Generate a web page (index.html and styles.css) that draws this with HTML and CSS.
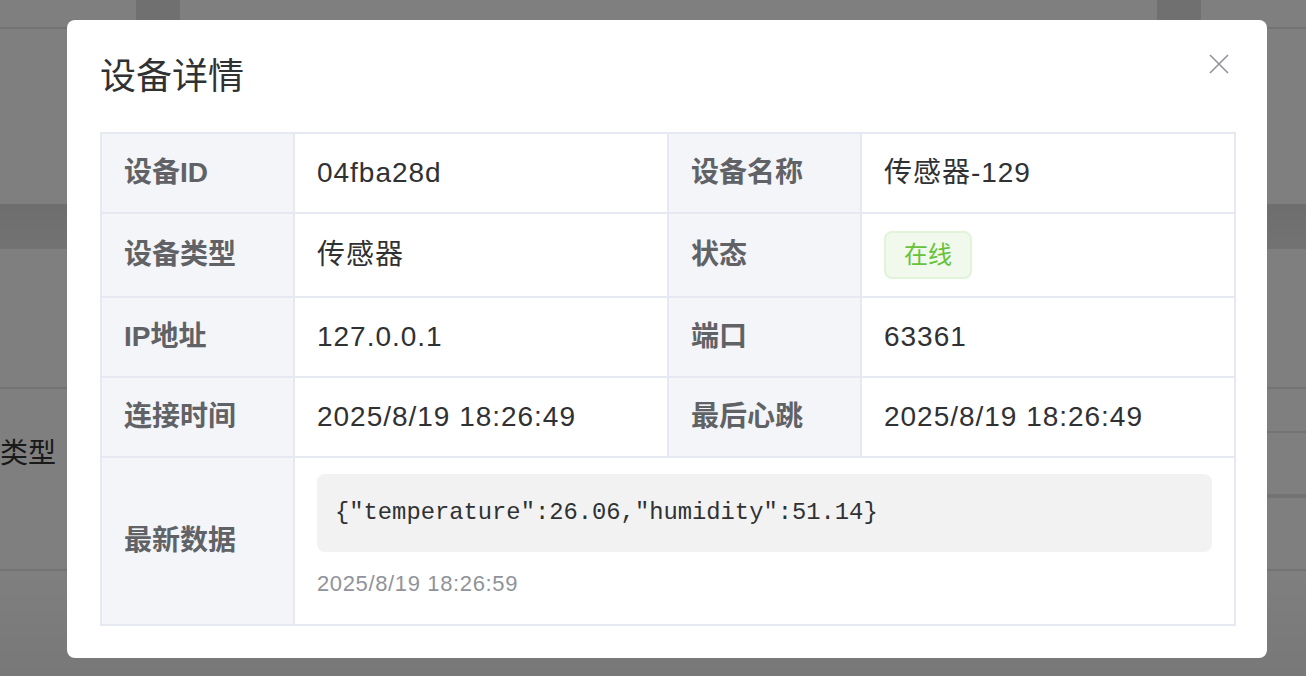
FILE: index.html
```html
<!DOCTYPE html>
<html lang="zh-CN">
<head>
<meta charset="utf-8">
<title>设备详情</title>
<link rel="stylesheet" href="styles.css">
</head>
<body>
<div class="page">
  <div class="page-top">
    <div class="page-col page-col-a"></div>
    <div class="page-col page-col-b"></div>
  </div>
  <div class="page-gap1"></div>
  <div class="page-band"></div>
  <div class="page-gap2"></div>
  <div class="page-row">
    <div class="page-label">类型</div>
    <div class="page-right">
      <div class="page-right-cell c1"></div>
      <div class="page-right-cell c2"></div>
      <div class="page-right-cell c3"></div>
    </div>
  </div>
  <div class="page-rest"></div>
</div>

<div class="mask">
  <div class="dialog">
    <div class="dialog-header">
      <h2 class="dialog-title">设备详情</h2>
      <button class="dialog-close" aria-label="关闭">
        <svg width="20" height="20" viewBox="0 0 20 20"><path d="M1 1 L19 19 M19 1 L1 19" stroke="#909399" stroke-width="1.6" fill="none"/></svg>
      </button>
    </div>
    <table class="desc">
      <colgroup>
        <col class="c-label"><col class="c-value"><col class="c-label"><col class="c-value">
      </colgroup>
      <tr class="r-text">
        <th>设备ID</th><td>04fba28d</td>
        <th>设备名称</th><td>传感器-129</td>
      </tr>
      <tr class="r-tag">
        <th>设备类型</th><td>传感器</td>
        <th>状态</th><td><span class="tag">在线</span></td>
      </tr>
      <tr class="r-text">
        <th>IP地址</th><td>127.0.0.1</td>
        <th>端口</th><td>63361</td>
      </tr>
      <tr class="r-text">
        <th>连接时间</th><td>2025/8/19 18:26:49</td>
        <th>最后心跳</th><td>2025/8/19 18:26:49</td>
      </tr>
      <tr class="r-data">
        <th>最新数据</th>
        <td colspan="3" class="data-cell">
          <pre class="code">{"temperature":26.06,"humidity":51.14}</pre>
          <div class="ts">2025/8/19 18:26:59</div>
        </td>
      </tr>
    </table>
  </div>
</div>
</body>
</html>
```

FILE: styles.css
```css
* { box-sizing: border-box; }
html, body { margin: 0; padding: 0; }
body {
  width: 1306px;
  height: 676px;
  overflow: hidden;
  background: #ffffff;
  font-family: "Liberation Sans", "Noto Sans CJK SC", sans-serif;
  color: #303133;
}

/* background page */
.page { width: 1306px; height: 676px; display: flex; flex-direction: column; }
.page-top {
  height: 29px;
  border-bottom: 2px solid #e6e6e6;
  display: flex;
  flex-shrink: 0;
}
.page-col { width: 44px; background: #e0e0e0; }
.page-col-a { margin-left: 136px; }
.page-col-b { margin-left: 977px; }
.page-gap1 { height: 175px; flex-shrink: 0; }
.page-band { height: 45px; background: linear-gradient(#dcdcdc, #e6e6e6); flex-shrink: 0; }
.page-gap2 { height: 138px; flex-shrink: 0; }
.page-row {
  height: 184px;
  border-top: 2px solid #e6e6e6;
  border-bottom: 2px solid #e6e6e6;
  display: flex;
  justify-content: space-between;
  flex-shrink: 0;
}
.page-label {
  margin-left: 0;
  margin-top: 47px;
  font-size: 28px;
  line-height: 36px;
  color: #333;
}
.page-right { width: 40px; display: flex; flex-direction: column; }
.page-right-cell { border-bottom: 2px solid #e6e6e6; }
.c1 { height: 44px; }
.c2 { height: 63px; }
.page-rest { flex: 1; background: linear-gradient(#fff, #f0f0f0); }

/* mask + dialog */
.mask {
  position: fixed;
  inset: 0;
  background: rgba(0, 0, 0, 0.5);
}
.dialog {
  position: relative;
  margin: 20px 0 0 67px;
  width: 1200px;
  height: 638px;
  background: #fff;
  border-radius: 8px;
  padding: 32px 33px 33px;
}
.dialog-header { height: 80px; }
.dialog-title {
  margin: 0;
  font-size: 36px;
  line-height: 50px;
  font-weight: 400;
  color: #303133;
}
.dialog-close {
  position: absolute;
  top: 34px;
  right: 38px;
  width: 20px;
  height: 20px;
  padding: 0;
  border: 0;
  background: transparent;
  display: flex;
}

/* descriptions table */
.desc {
  width: 1134px;
  table-layout: fixed;
  border-collapse: collapse;
  border: 2px solid #e6e9f1;
}
.c-label { width: 193px; }
.c-value { width: 374px; }
.desc th, .desc td {
  border: 2px solid #e6e9f1;
  padding: 0 22px;
  font-size: 28px;
  line-height: 36px;
  text-align: left;
  vertical-align: middle;
}
.desc th {
  background: #f3f5f9;
  color: #606266;
  font-weight: 700;
}
.desc td {
  color: #303133;
  font-weight: 400;
  letter-spacing: 0.035em;
}
.r-text { height: 80px; }
.r-tag { height: 84px; }
.r-data { height: 168px; }

.tag {
  display: inline-flex;
  align-items: center;
  height: 48px;
  padding: 0 18px;
  border: 2px solid #e1f3d8;
  background: #f0f9eb;
  color: #67c23a;
  border-radius: 8px;
  font-size: 24px;
  line-height: 1;
  letter-spacing: 0;
  vertical-align: middle;
}

.desc td.data-cell { padding: 15px 22px 25px; }
.code {
  margin: 0;
  height: 78px;
  background: #f2f2f2;
  border-radius: 8px;
  padding: 0 18px;
  display: flex;
  align-items: center;
  font-family: "Liberation Mono", monospace;
  font-size: 23.8px;
  letter-spacing: 0;
  color: #303133;
}
.ts {
  margin-top: 18px;
  font-size: 22px;
  line-height: 28px;
  letter-spacing: 0.029em;
  color: #909399;
}
```
